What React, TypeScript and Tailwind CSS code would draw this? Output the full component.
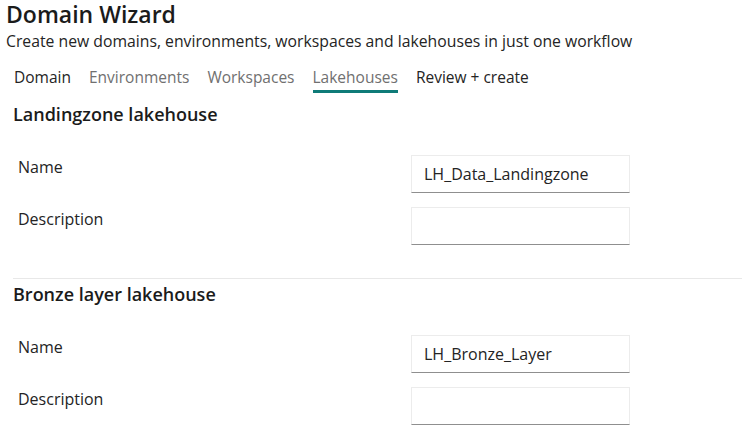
import React from "react";

function Field({ label, value }: { label: string; value?: string }) {
  return (
    <div className="flex">
      <div className="w-[411px] pl-[18px] text-[16px] leading-[24px] text-[#242424]">{label}</div>
      <div className="w-[219px] h-[38px] border border-[#ececec] border-b-[#8f8f8f] bg-white pl-[12px] flex items-center text-[16px] text-[#242424]">
        {value}
      </div>
    </div>
  );
}

function Section({ title, name }: { title: string; name: string }) {
  return (
    <div>
      <h2 className="pl-[13px] text-[18px] font-semibold leading-[24px] text-[#1b1b1b]">{title}</h2>
      <div className="mt-[29px] flex flex-col gap-[14px]">
        <Field label="Name" value={name} />
        <Field label="Description" />
      </div>
    </div>
  );
}

export default function App() {
  const tabs = [
    { t: "Domain", c: "text-[#242424]", active: false },
    { t: "Environments", c: "text-[#707070]", active: false },
    { t: "Workspaces", c: "text-[#707070]", active: false },
    { t: "Lakehouses", c: "text-[#707070]", active: true },
    { t: "Review + create", c: "text-[#242424]", active: false },
  ];
  return (
    <div className="w-[742px] h-[441px] overflow-hidden bg-white font-['Open_Sans',sans-serif] text-[#242424]">
      <div className="pl-[6px]">
        <h1 className="text-[23px] font-semibold leading-[28px] text-[#1b1b1b]">Domain Wizard</h1>
        <p className="text-[15.75px] leading-[26px] text-[#242424]">
          Create new domains, environments, workspaces and lakehouses in just one workflow
        </p>
      </div>
      <div className="mt-[12px] flex gap-[18px] pl-[14px]">
        {tabs.map((tab) => (
          <div key={tab.t} className="flex flex-col">
            <span className={`text-[15.5px] leading-[22px] ${tab.c}`}>{tab.t}</span>
            <div className={`mt-[2px] h-[3px] ${tab.active ? "bg-[#0f7b78]" : "bg-transparent"}`} />
          </div>
        ))}
      </div>
      <div className="mt-[9px]">
        <Section title="Landingzone lakehouse" name="LH_Data_Landingzone" />
      </div>
      <div className="mt-[33px] ml-[13px] h-px bg-[#e8e8e8]" />
      <div className="mt-[3px]">
        <Section title="Bronze layer lakehouse" name="LH_Bronze_Layer" />
      </div>
    </div>
  );
}
